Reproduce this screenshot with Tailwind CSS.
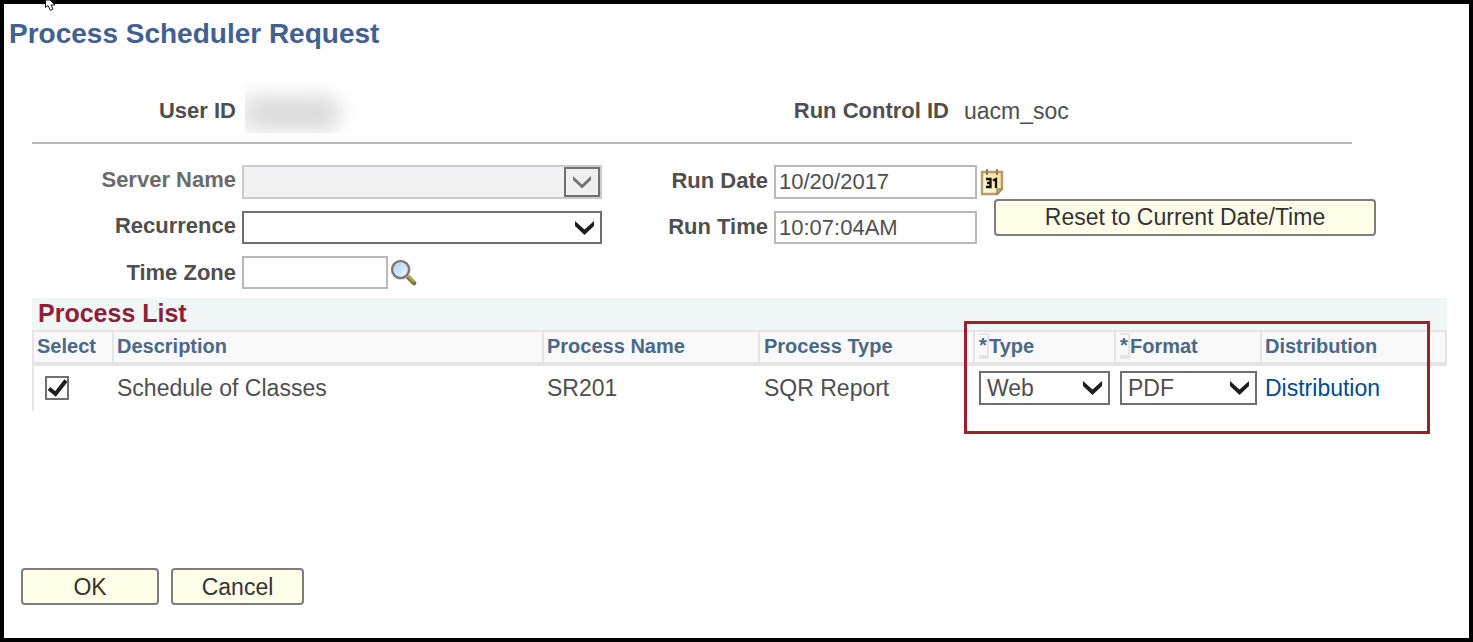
<!DOCTYPE html>
<html lang="en">
<head>
<meta charset="utf-8">
<title>Process Scheduler Request</title>
<script src="https://cdn.jsdelivr.net/npm/@tailwindcss/browser@4"></script>
</head>
<body class="bg-white font-['Liberation_Sans',Arial,sans-serif] text-[#4f4f4f]">
<main class="relative flex min-h-screen flex-col border-4 border-black pl-7 pr-[22px] pt-3">
  <svg class="absolute left-[41px] -top-1" width="12" height="11" viewBox="0 0 12 11" aria-hidden="true">
    <path d="M.5 0V7.500L3 5.500 5.500 10.500 8 9 6 5H10L5 0Z" fill="#fff" stroke="#111" stroke-width="1"/>
  </svg>

  <h1 class="-ml-[23px] text-[28px] leading-9 font-bold text-[#426092]">Process Scheduler Request</h1>

  <section class="mt-7 mr-[95px] flex h-16 items-start border-b-2 border-[#b9b9b9] text-[22px] leading-[26px]">
    <span class="mt-[18px] w-[204px] text-right font-bold">User ID</span>
    <span class="relative ml-[9px] h-[53px] w-[110px] overflow-hidden" role="img" aria-label="Hidden user ID">
      <span class="absolute -left-4 top-4 h-8 w-[110px] rounded-full bg-[#f0f0f0] blur-[10px]"></span>
      <span class="absolute left-1 top-5 h-7 w-[88px] rounded-md bg-[#dadada] blur-[10px]"></span>
    </span>
    <span class="mt-[18px] ml-[243px] w-[351px] text-right font-bold">Run Control ID</span>
    <span class="mt-[18px] ml-[15px] text-[23px]">uacm_soc</span>
  </section>

  <form class="mt-[21px] flex items-start text-[22px] leading-[26px]">
    <div class="grid w-[570px] grid-cols-[204px_360px] items-center gap-x-[6px] gap-y-3">
      <label for="server" class="pb-1 text-right font-bold text-[#6b6b6b]">Server Name</label>
      <span class="relative h-[34px]">
        <select id="server" disabled class="h-full w-full appearance-none border-2 border-[#c8ccd2] bg-[#f2f2f2] px-1 opacity-100"><option></option></select>
        <span class="pointer-events-none absolute right-0.5 top-0.5 flex h-[30px] w-9 items-center justify-center border-2 border-[#707070] bg-[#efefef]">
          <svg width="18" height="13" viewBox="0 0 18 13"><path d="M0 0 9 8.500 18 0V4L9 12.500 0 4Z" fill="#757575"/></svg>
        </span>
      </span>
      <label for="recurrence" class="pb-1 text-right font-bold">Recurrence</label>
      <span class="relative h-[33px]">
        <select id="recurrence" class="h-full w-full appearance-none border-2 border-[#6e6e6e] bg-white px-1"><option></option></select>
        <svg class="pointer-events-none absolute right-2 top-2.5" width="19" height="14" viewBox="0 0 19 14"><path d="M0 0 9.500 8.500 19 0V5L9.500 14 0 5Z" fill="#1e1e1e"/></svg>
      </span>
      <label for="zone" class="text-right font-bold">Time Zone</label>
      <span class="flex h-[33px] items-center gap-[2px]">
        <input id="zone" type="text" class="h-full w-[146px] border-2 border-[#b9b9b9] bg-white px-[3px]">
        <button type="button" aria-label="Look up time zone">
          <svg width="27" height="27" viewBox="0 0 28 28">
            <defs><linearGradient id="lens" x1="0" y1="0" x2="1" y2="1"><stop offset="0" stop-color="#9ccbff"/><stop offset=".55" stop-color="#cfe6ff"/><stop offset="1" stop-color="#fff"/></linearGradient></defs>
            <path d="M18 18 25 25" stroke="#77722f" stroke-width="4.500" stroke-linecap="round"/>
            <path d="M18.500 17.500 25 24" stroke="#b5ad4e" stroke-width="2"/>
            <circle cx="11" cy="11" r="8.500" fill="url(#lens)" stroke="#e2e2e2" stroke-width="4"/>
            <circle cx="11" cy="11" r="8.800" fill="none" stroke="#77777c" stroke-width="2.400"/>
          </svg>
        </button>
      </span>
    </div>

    <div class="grid grid-cols-[166px_203px] items-center gap-x-[6px] gap-y-3">
      <label for="date" class="pb-0.5 text-right font-bold">Run Date</label>
      <span class="flex h-[34px] items-center gap-[3px]">
        <input id="date" type="text" value="10/20/2017" class="h-full w-[203px] shrink-0 border-2 border-[#b9b9b9] bg-white px-[3px]">
        <button type="button" aria-label="Choose run date" class="shrink-0">
          <svg width="24" height="28" viewBox="0 0 24 28">
            <defs><linearGradient id="page" x1="0" y1="1" x2="1" y2="0"><stop offset="0" stop-color="#fffdf6"/><stop offset="1" stop-color="#fbd98a"/></linearGradient></defs>
            <path d="M2 4H22V21L17 26H2Z" fill="url(#page)" stroke="#b59d6c" stroke-width="2.400"/>
            <path d="M17 26V21H22Z" fill="#c9b27e" stroke="#a58b55" stroke-width="1.500"/>
            <path d="M7 1V7M17 1V7" stroke="#8d7b5c" stroke-width="2"/>
            <path d="M6 11H10.500V19H6M7 15H10.500M13 12.500 16 11V20" fill="none" stroke="#111" stroke-width="2.300"/>
          </svg>
        </button>
      </span>
      <label for="time" class="pb-0.5 text-right font-bold">Run Time</label>
      <input id="time" type="text" value="10:07:04AM" class="h-[33px] w-full border-2 border-[#b9b9b9] bg-white px-[3px]">
    </div>
    <button type="button" class="mt-[34px] ml-[17px] h-[37px] w-[382px] rounded border-2 border-[#7d7d80] bg-[#ffffe9] pb-0.5 text-[23px] text-[#333]">Reset to Current Date/Time</button>
  </form>

  <section class="relative mt-[9px]">
    <h2 class="h-8 bg-[#f0f5f5] pl-[6px] text-[25px] leading-[31px] font-bold text-[#8f1f36]">Process List</h2>
    <table class="w-full table-fixed border-separate border-spacing-0 text-left text-[23px] leading-[26px]">
      <colgroup><col class="w-20"><col><col class="w-[216px]"><col class="w-[215px]"><col class="w-[141px]"><col class="w-[146px]"><col class="w-[187px]"></colgroup>
      <thead class="text-[20px] text-[#4a6888]">
        <tr class="h-9 bg-[#f9f9f9]">
          <th class="border-t-2 border-b-4 border-l-2 border-[#e5e5e5] p-0 pb-0.5 pl-[3px]">Select</th>
          <th class="border-t-2 border-b-4 border-l-2 border-[#e5e5e5] p-0 pb-0.5 pl-[3px]">Description</th>
          <th class="border-t-2 border-b-4 border-l-2 border-[#e5e5e5] p-0 pb-0.5 pl-[3px]">Process Name</th>
          <th class="border-t-2 border-b-4 border-l-2 border-[#e5e5e5] p-0 pb-0.5 pl-1">Process Type</th>
          <th class="border-t-2 border-b-4 border-l-2 border-[#e5e5e5] p-0 pb-0.5 pl-1"><span class="flex"><span class="w-[10px] border-t-2 border-r-2 border-b-4 border-[#e5e5e5] leading-5">*</span>Type</span></th>
          <th class="border-t-2 border-b-4 border-l-2 border-[#e5e5e5] p-0 pb-0.5 pl-1"><span class="flex"><span class="w-[10px] border-t-2 border-r-2 border-b-4 border-[#e5e5e5] leading-5">*</span>Format</span></th>
          <th class="border-x-2 border-t-2 border-b-4 border-[#e5e5e5] p-0 pb-0.5 pl-[3px]">Distribution</th>
        </tr>
      </thead>
      <tbody>
        <tr class="h-[45px]">
          <td class="border-l-2 border-[#e5e5e5] p-0 pb-0.5 pl-[11px]">
            <span class="relative block size-6">
              <input type="checkbox" checked aria-label="Select Schedule of Classes" class="block size-6 appearance-none border-2 border-[#707070] bg-white">
              <svg class="pointer-events-none absolute left-0.5 top-0.5" width="20" height="20" viewBox="0 0 20 20"><path d="M2 10.500 8.500 16 19 2.500" fill="none" stroke="#1e1e1e" stroke-width="4"/></svg>
            </span>
          </td>
          <td class="p-0 pb-0.5 pl-[5px]">Schedule of Classes</td>
          <td class="p-0 pb-0.5 pl-[5px]">SR201</td>
          <td class="p-0 pb-0.5 pl-[6px]">SQR Report</td>
          <td class="p-0 pb-0.5 pl-[6px]">
            <span class="relative block h-[34px] w-[131px]">
              <select aria-label="Type" class="h-full w-full appearance-none border-2 border-[#6e6e6e] bg-white px-[6px]"><option>Web</option></select>
              <svg class="pointer-events-none absolute right-2 top-2.5" width="19" height="14" viewBox="0 0 19 14"><path d="M0 0 9.500 8.500 19 0V5L9.500 14 0 5Z" fill="#1e1e1e"/></svg>
            </span>
          </td>
          <td class="p-0 pb-0.5 pl-[6px]">
            <span class="relative block h-[34px] w-[137px]">
              <select aria-label="Format" class="h-full w-full appearance-none border-2 border-[#6e6e6e] bg-white px-[6px]"><option>PDF</option></select>
              <svg class="pointer-events-none absolute right-2 top-2.5" width="19" height="14" viewBox="0 0 19 14"><path d="M0 0 9.500 8.500 19 0V5L9.500 14 0 5Z" fill="#1e1e1e"/></svg>
            </span>
          </td>
          <td class="p-0 pb-0.5 pl-[5px]"><a href="#" class="text-[#004b91]">Distribution</a></td>
        </tr>
      </tbody>
    </table>
    <div class="pointer-events-none absolute right-[17px] top-[23px] h-[113px] w-[466px] border-3 border-[#9d1f2e]"></div>
  </section>

  <footer class="-ml-[11px] mt-auto flex gap-3 pb-[33px] text-[23px] text-[#333]">
    <button type="button" class="h-[37px] w-[138px] rounded border-2 border-[#7d7d80] bg-[#ffffe9] pb-0.5">OK</button>
    <button type="button" class="h-[37px] w-[133px] rounded border-2 border-[#7d7d80] bg-[#ffffe9] pb-0.5">Cancel</button>
  </footer>
</main>
</body>
</html>
